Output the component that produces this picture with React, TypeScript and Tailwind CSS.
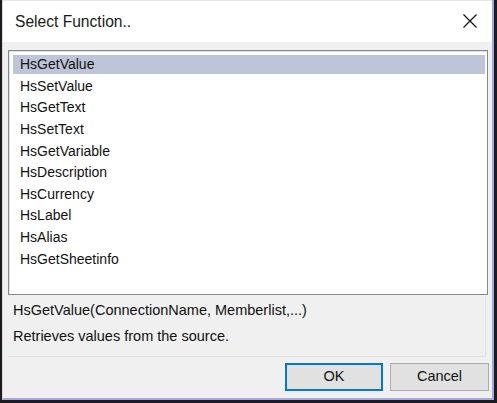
const functions = [
  "HsGetValue",
  "HsSetValue",
  "HsGetText",
  "HsSetText",
  "HsGetVariable",
  "HsDescription",
  "HsCurrency",
  "HsLabel",
  "HsAlias",
  "HsGetSheetinfo",
];

export default function App() {
  return (
    <div
      className="w-[497px] h-[403px] bg-[#1c1c1c] pl-[2px] pr-[3px] pb-[3px] overflow-hidden"
      style={{ fontFamily: '"Liberation Sans", Arial, sans-serif' }}
    >
      <div className="flex flex-col h-full bg-[#f0f0f0] border-l border-[#d8d8d8] border-r-[2px] border-b-[2px] border-r-[#a6a6e6] border-b-[#a6a6e6]">
        {/* Title bar */}
        <div className="h-[42px] shrink-0 bg-white border-t border-[#e4e4e4] flex items-center justify-between pl-[12px] pr-[15px]">
          <span className="text-[15.6px] text-[#1a1a1a] leading-none">Select Function..</span>
          <svg width="14" height="14" viewBox="0 0 14 14" className="mt-[-2px]">
            <path d="M0.5 0.5 L13.5 13.5 M13.5 0.5 L0.5 13.5" stroke="#111" strokeWidth="1.2" fill="none" />
          </svg>
        </div>

        {/* Body */}
        <div className="flex flex-col flex-1 pt-[8px] pl-[5px] pr-[2px]">
          {/* List */}
          <div className="h-[245px] w-[480px] border border-[#828790] bg-white pt-[3px] pl-[4px] pr-[2px] shadow-[inset_1px_1px_0_#e3e3e3]">
            {functions.map((f, i) => (
              <div key={f} className="h-[21.6px] flex items-center">
                <div
                  className={`w-full h-[19px] flex items-center pl-[7px] text-[14px] text-[#111] ${
                    i === 0 ? "bg-[#bfc5d8]" : ""
                  }`}
                >
                  {f}
                </div>
              </div>
            ))}
          </div>

          {/* Description */}
          <div className="mt-[2px] h-[60px] w-[478px] border-b border-r border-[#e2e2e2] flex flex-col pl-[5px] text-[14.5px] text-[#111]">
            <div className="h-[27px] flex items-center pt-[1px]">HsGetValue(ConnectionName, Memberlist,...)</div>
            <div className="h-[26px] flex items-center">Retrieves values from the source.</div>
          </div>

          {/* Buttons */}
          <div className="flex justify-end gap-[7px] pt-[6px] pr-[1px]">
            <button className="w-[98px] h-[28px] border-2 border-[#0078d7] bg-[#e1e1e1] text-[14.5px] text-[#111]">
              OK
            </button>
            <button className="w-[99px] h-[28px] border border-[#adadad] bg-[#e1e1e1] text-[14.5px] text-[#111]">
              Cancel
            </button>
          </div>
        </div>
      </div>
    </div>
  );
}
